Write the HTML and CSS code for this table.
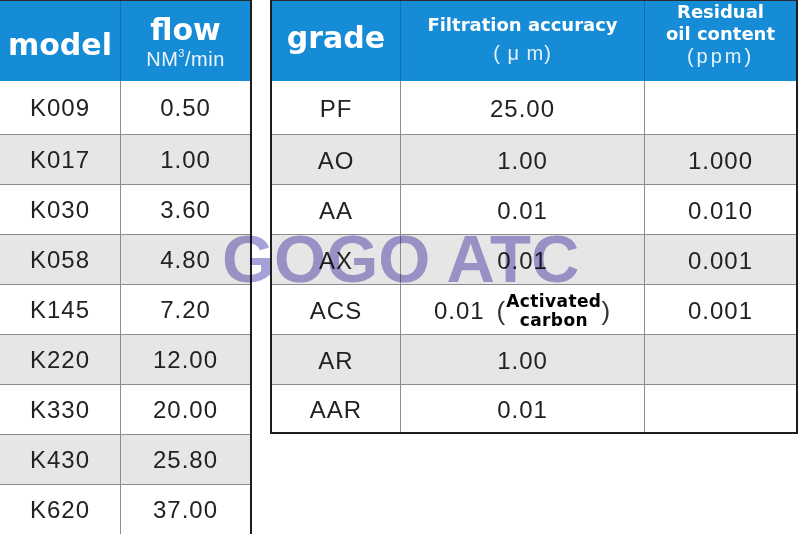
FILE: index.html
```html
<!DOCTYPE html>
<html>
<head>
<meta charset="utf-8">
<link rel="stylesheet" href="styles.css">
</head>
<body>
<div class="page">
  <div class="tbl left">
    <div class="row head">
      <div class="th model">model</div>
      <div class="th flow"><span class="big">flow</span><span class="unit">NM<sup>3</sup>/min</span></div>
    </div>
    <div class="row first"><div class="td">K009</div><div class="td">0.50</div></div>
    <div class="row alt"><div class="td">K017</div><div class="td">1.00</div></div>
    <div class="row"><div class="td">K030</div><div class="td">3.60</div></div>
    <div class="row alt"><div class="td">K058</div><div class="td">4.80</div></div>
    <div class="row"><div class="td">K145</div><div class="td">7.20</div></div>
    <div class="row alt"><div class="td">K220</div><div class="td">12.00</div></div>
    <div class="row"><div class="td">K330</div><div class="td">20.00</div></div>
    <div class="row alt"><div class="td">K430</div><div class="td">25.80</div></div>
    <div class="row last"><div class="td">K620</div><div class="td">37.00</div></div>
  </div>

  <div class="tbl right">
    <div class="row head">
      <div class="th grade">grade</div>
      <div class="th acc"><span class="bold-line">Filtration accuracy</span><span class="paren-unit">( μ m)</span></div>
      <div class="th oil"><span class="bold-line">Residual</span><span class="bold-line">oil content</span><span class="paren-unit ppm">(ppm)</span></div>
    </div>
    <div class="row first"><div class="td">PF</div><div class="td">25.00</div><div class="td"></div></div>
    <div class="row alt"><div class="td">AO</div><div class="td">1.00</div><div class="td">1.000</div></div>
    <div class="row"><div class="td">AA</div><div class="td">0.01</div><div class="td">0.010</div></div>
    <div class="row alt"><div class="td">AX</div><div class="td">0.01</div><div class="td">0.001</div></div>
    <div class="row"><div class="td">ACS</div><div class="td acs"><span>0.01</span><span class="par lp">(</span><span class="note">Activated<br>carbon</span><span class="par rp">)</span></div><div class="td">0.001</div></div>
    <div class="row alt"><div class="td">AR</div><div class="td">1.00</div><div class="td"></div></div>
    <div class="row last"><div class="td">AAR</div><div class="td">0.01</div><div class="td"></div></div>
  </div>

  <div class="watermark">GOGO ATC</div>
</div>
</body>
</html>
```

FILE: styles.css
```css
html, body {
  margin: 0;
  padding: 0;
  background: #fff;
  overflow: hidden;
}

.page {
  position: relative;
  width: 800px;
  height: 534px;
  display: flex;
  align-items: flex-start;
  font-family: "Liberation Sans", Arial, sans-serif;
  color: #222;
}

.tbl {
  display: grid;
  border-top: 1px solid #2a2a2a;
}

.row {
  display: contents;
}

.left {
  grid-template-columns: 121px 129px;
  grid-template-rows: 80px 54px repeat(8, 50px);
  border-right: 2px solid #1e1e1e;
}

.right {
  margin-left: 18px;
  grid-template-columns: 129px 244px 151px;
  grid-template-rows: 80px 54px repeat(5, 50px) 47px;
  border-left: 2px solid #1e1e1e;
  border-right: 2px solid #1e1e1e;
  border-bottom: 2px solid #1e1e1e;
}

.right .td {
  padding-top: 3px;
}

.th {
  background: #168bd6;
  color: #fff;
  display: flex;
  flex-direction: column;
  align-items: center;
  justify-content: center;
  border-right: 1px solid #1270b0;
  box-sizing: border-box;
}

.th:last-child {
  border-right: none;
}

.model, .grade {
  font-family: "DejaVu Sans", sans-serif;
  font-weight: bold;
  font-size: 30px;
  padding-top: 6px;
}

.grade {
  padding-top: 0;
  padding-bottom: 8px;
}

.flow {
  justify-content: flex-start;
  padding-top: 14px;
}

.flow .big {
  font-family: "DejaVu Sans", sans-serif;
  font-weight: bold;
  font-size: 30px;
  line-height: 30px;
}

.flow .unit {
  font-size: 20px;
  line-height: 28px;
  letter-spacing: 0.5px;
  color: #eef6fc;
}

.flow sup {
  font-size: 11px;
  vertical-align: 9px;
  line-height: 0;
}

.acc {
  justify-content: flex-start;
  padding-top: 9px;
}

.acc .bold-line {
  line-height: 30px;
}

.bold-line {
  font-family: "DejaVu Sans", sans-serif;
  font-weight: bold;
  font-size: 18px;
  line-height: 22px;
}

.paren-unit {
  font-size: 20px;
  line-height: 26px;
  letter-spacing: 1px;
  color: #e6f2fb;
}

.oil {
  justify-content: flex-start;
  padding-top: 0;
}

.oil .ppm {
  letter-spacing: 3px;
  line-height: 22px;
}

.td {
  display: flex;
  align-items: center;
  justify-content: center;
  font-size: 24px;
  letter-spacing: 1px;
  color: #222;
  background: #fff;
  border-right: 1px solid #8c8c8c;
  border-bottom: 1px solid #8c8c8c;
  box-sizing: border-box;
}

.td:last-child {
  border-right: none;
}

.row.last .td {
  border-bottom: none;
}

.row.alt .td {
  background: #e6e6e6;
}

.par {
  font-size: 26px;
  color: #333;
}

.lp {
  margin-left: 12px;
}

.note {
  font-family: "DejaVu Sans", sans-serif;
  font-weight: bold;
  font-size: 17px;
  line-height: 19px;
  letter-spacing: 0.4px;
  color: #000;
  text-align: center;
}

.watermark {
  position: absolute;
  left: 222px;
  top: 225px;
  font-family: "Liberation Sans", Arial, sans-serif;
  font-weight: bold;
  font-size: 67px;
  line-height: 67px;
  color: #a7a1da;
  mix-blend-mode: multiply;
  white-space: nowrap;
  pointer-events: none;
}
```
